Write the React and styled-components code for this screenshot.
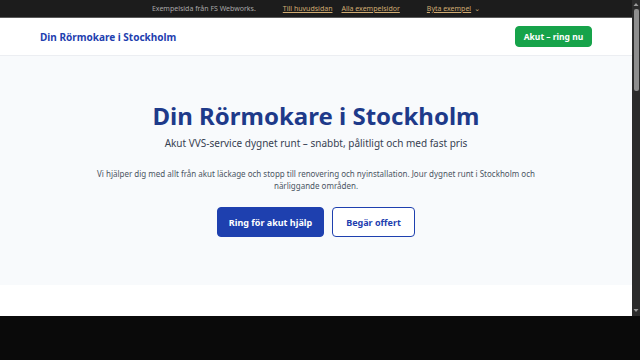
import styled, { createGlobalStyle } from 'styled-components';

const GlobalStyle = createGlobalStyle`
  html, body {
    margin: 0;
    padding: 0;
    background: #0a0a0a;
  }
  * {
    box-sizing: border-box;
  }
`;

const Frame = styled.div`
  width: 640px;
  height: 316px;
  display: flex;
  font-family: 'Noto Sans', 'DejaVu Sans', sans-serif;
`;

const Page = styled.div`
  flex: 1;
  overflow: hidden;
  background: #fff;
`;

const ScrollTrack = styled.div`
  width: 8px;
  background: #2b2b2b;
  display: flex;
  flex-direction: column;
  align-items: center;
  padding: 2px 0 3px;
  .thumb {
    width: 5px;
    height: 82px;
    margin-top: 2px;
    background: #8e8e8e;
    border-radius: 2px;
  }
  .spacer {
    flex: 1;
  }
`;

const TopBar = styled.div`
  height: 18px;
  background: #1c1c1c;
  border-bottom: 1px solid #5a5a5a;
  display: flex;
  align-items: center;
  justify-content: center;
  gap: 27px;
  font-size: 7px;
  color: #a8a8a8;
  .links {
    display: flex;
    gap: 9px;
  }
  a {
    color: #d1ac72;
    text-decoration: underline;
  }
  .caret {
    margin-left: 3px;
    font-size: 7px;
    color: #d1ac72;
  }
`;

const Header = styled.header`
  height: 38px;
  background: #fff;
  border-bottom: 1px solid #eceef2;
  display: flex;
  align-items: center;
  justify-content: space-between;
  padding: 0 40px;
  .logo {
    font-size: 10px;
    font-weight: 700;
    color: #1e40af;
  }
`;

const Button = styled.button`
  font-family: inherit;
  font-weight: 700;
  cursor: pointer;
  border-radius: 4px;
  font-size: ${(p) => (p.small ? '8.5px' : '9px')};
  height: ${(p) => (p.small ? '21px' : '30px')};
  width: ${(p) => p.w}px;
  padding: 0;
  background: ${(p) => p.bg || '#fff'};
  color: ${(p) => p.color || '#1e40af'};
  border: 1px solid ${(p) => p.bg || '#1e40af'};
`;

const Hero = styled.section`
  background: #f8fafc;
  padding: 45px 40px 48px;
  text-align: center;
  h1 {
    margin: 0;
    font-size: 24px;
    font-weight: 700;
    color: #1e3a8a;
    line-height: 29px;
  }
  .sub {
    margin: 6px 0 0;
    font-size: 10px;
    line-height: 14px;
    color: #374151;
  }
  .text {
    margin: 18px auto 0;
    max-width: 460px;
    font-size: 8px;
    line-height: 12px;
    color: #4b5563;
  }
`;

const Actions = styled.div`
  display: flex;
  justify-content: center;
  gap: 8px;
  margin-top: 15px;
`;

const Section = styled.section`
  height: 120px;
  background: #fff;
`;

export default function App() {
  return (
    <>
      <GlobalStyle />
      <Frame>
        <Page>
          <TopBar>
            <span>Exempelsida från FS Webworks.</span>
            <span className="links">
              <a>Till huvudsidan</a>
              <a>Alla exempelsidor</a>
            </span>
            <span>
              <a>Byta exempel</a>
              <span className="caret">⌄</span>
            </span>
          </TopBar>
          <Header>
            <div className="logo">Din Rörmokare i Stockholm</div>
            <Button small w={77} bg="#16a34a" color="#fff">
              Akut – ring nu
            </Button>
          </Header>
          <Hero>
            <h1>Din Rörmokare i Stockholm</h1>
            <p className="sub">Akut VVS-service dygnet runt – snabbt, pålitligt och med fast pris</p>
            <p className="text">
              Vi hjälper dig med allt från akut läckage och stopp till renovering och nyinstallation. Jour dygnet
              runt i Stockholm och närliggande områden.
            </p>
            <Actions>
              <Button w={107} bg="#1e40af" color="#fff">
                Ring för akut hjälp
              </Button>
              <Button w={83}>Begär offert</Button>
            </Actions>
          </Hero>
          <Section />
        </Page>
        <ScrollTrack>
          <svg width="6" height="5" viewBox="0 0 6 5">
            <path d="M3 1 L5.5 4 L0.5 4 Z" fill="#9a9a9a" />
          </svg>
          <div className="thumb" />
          <div className="spacer" />
          <svg width="6" height="5" viewBox="0 0 6 5">
            <path d="M3 4 L5.5 1 L0.5 1 Z" fill="#9a9a9a" />
          </svg>
        </ScrollTrack>
      </Frame>
    </>
  );
}
